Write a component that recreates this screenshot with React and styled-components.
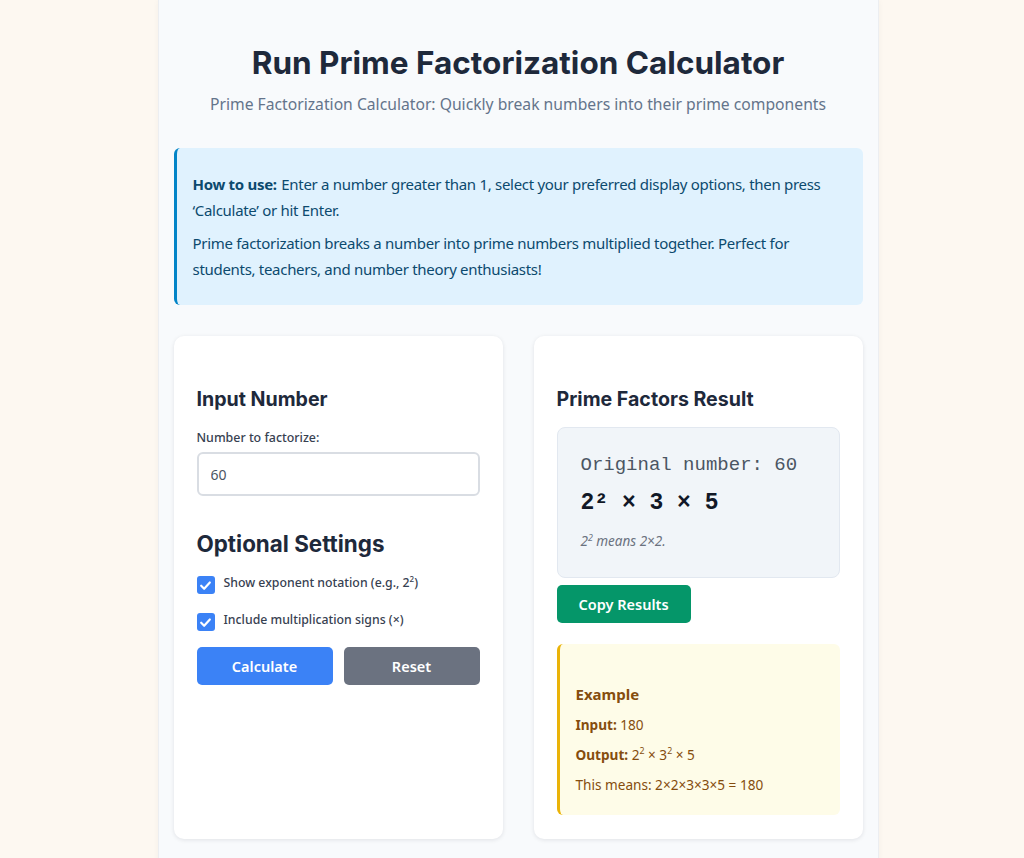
import React from "react";
import styled, { createGlobalStyle } from "styled-components";

const Global = createGlobalStyle`
  html, body { margin: 0; padding: 0; background: #fdf8f1; }
  body { font-family: "Noto Sans", "Liberation Sans", sans-serif; }
  * { box-sizing: border-box; }
`;

const Page = styled.div`
  display: flex;
  justify-content: center;
  padding-left: 12px;
  min-height: 858px;
`;

const Container = styled.div`
  width: 721px;
  background: #f8fafc;
  border-left: 1px solid #eceef1;
  border-right: 1px solid #eceef1;
  box-shadow: 0 0 6px rgba(0, 0, 0, 0.04);
  padding: 41px 15px 24px;
`;

const Title = styled.h1`
  margin: 0;
  text-align: center;
  font-family: "Inter", "Roboto", sans-serif;
  font-weight: 700;
  font-size: 31.5px;
  line-height: 44px;
  color: #1e293b;
`;

const Subtitle = styled.p`
  margin: 8px 0 0;
  text-align: center;
  font-size: 15.7px;
  line-height: 22px;
  color: #64748b;
`;

const InfoBox = styled.div`
  margin-top: 33px;
  background: #e0f2fe;
  border-left: 3px solid #0284c7;
  border-radius: 6px;
  padding: 23px 16px 23px;
  color: #0c4a6e;
  font-size: 15px;
  letter-spacing: -0.3px;
  line-height: 26px;
`;

const InfoPara = styled.p`
  margin: ${(p) => (p.$first ? "0" : "7px 0 0")};
`;

const Lead = styled.strong`
  font-weight: 700;
  margin-right: 1px;
`;

const Grid = styled.div`
  margin-top: 31px;
  display: grid;
  grid-template-columns: 1fr 1fr;
  gap: 31px;
`;

const Card = styled.section`
  background: #ffffff;
  border-radius: 10px;
  box-shadow: 0 1px 4px rgba(15, 23, 42, 0.1);
  padding: 50px 23px 24px;
  min-height: 503px;
`;

const CardTitle = styled.h2`
  margin: 0;
  font-family: "Inter", "Roboto", sans-serif;
  font-weight: 700;
  font-size: ${(p) => (p.$large ? "22.4px" : "19.6px")};
  line-height: 26px;
  color: #1e293b;
`;

const Label = styled.label`
  display: block;
  margin-top: 16px;
  font-size: 12.4px;
  font-weight: 500;
  line-height: 20px;
  color: #374151;
`;

const NumberInput = styled.input`
  display: block;
  margin-top: 4px;
  width: 100%;
  height: 44px;
  border: 2px solid #d9dde3;
  border-radius: 6px;
  padding: 0 12px;
  font-family: "Noto Sans", sans-serif;
  font-size: 14px;
  color: #4b5563;
  background: #fff;
  outline: none;
`;

const SettingsBlock = styled.div`
  margin-top: 35px;
`;

const CheckRow = styled.label`
  display: flex;
  align-items: center;
  gap: 9px;
  margin-top: 14px;
  font-size: 12.3px;
  font-weight: 500;
  line-height: 20px;
  color: #374151;
`;

const Box = styled.span`
  width: 18px;
  height: 18px;
  border-radius: 3px;
  background: #3b82f6;
  display: flex;
  align-items: center;
  justify-content: center;
  flex-shrink: 0;
  margin-top: 5px;
`;

const Sup = styled.sup`
  font-size: 0.65em;
  line-height: 0;
`;

const ButtonRow = styled.div`
  display: grid;
  grid-template-columns: 1fr 1fr;
  gap: 11px;
  margin-top: 16px;
`;

const Button = styled.button`
  height: 38px;
  border: none;
  border-radius: 5px;
  background: ${(p) => p.$bg};
  color: #fff;
  font-family: "Noto Sans", sans-serif;
  font-size: 14.5px;
  font-weight: 600;
  padding: 0 22px;
  cursor: pointer;
`;

const ResultBox = styled.div`
  margin-top: 15px;
  background: #f1f5f9;
  border: 1px solid #e2e8f0;
  border-radius: 8px;
  padding: 23px 23px 26px;
`;

const Original = styled.div`
  font-family: "Liberation Mono", "Courier New", monospace;
  font-size: 19px;
  line-height: 28px;
  color: #4b5563;
`;

const Factors = styled.div`
  margin-top: 9px;
  font-family: "Liberation Mono", "Courier New", monospace;
  font-weight: 700;
  font-size: 23px;
  line-height: 30px;
  color: #111827;
`;

const Note = styled.div`
  margin-top: 13px;
  font-style: italic;
  font-size: 13.5px;
  line-height: 20px;
  color: #6b7280;
`;

const CopyWrap = styled.div`
  display: flex;
  margin-top: 7px;
`;

const ExampleBox = styled.div`
  margin-top: 21px;
  background: #fefce8;
  border-left: 3px solid #eab308;
  border-radius: 6px;
  padding: 39px 16px 20px;
  color: #854d0e;
  font-size: 13.6px;
  line-height: 20px;
`;

const ExampleTitle = styled.div`
  font-weight: 700;
  font-size: 15px;
  line-height: 22px;
`;

const ExLine = styled.p`
  margin: 10px 0 0;
`;

const Check = () => (
  <svg width="13" height="13" viewBox="0 0 24 24" fill="none" stroke="#fff" strokeWidth="4" strokeLinecap="round" strokeLinejoin="round">
    <polyline points="4 12.5 9.5 18 20 6.5" />
  </svg>
);

export default function App() {
  return (
    <>
      <Global />
      <Page>
        <Container>
          <Title>Run Prime Factorization Calculator</Title>
          <Subtitle>Prime Factorization Calculator: Quickly break numbers into their prime components</Subtitle>
          <InfoBox>
            <InfoPara $first>
              <Lead>How to use:</Lead> Enter a number greater than 1, select your preferred display options, then press ‘Calculate’ or hit Enter.
            </InfoPara>
            <InfoPara>
              Prime factorization breaks a number into prime numbers multiplied together. Perfect for students, teachers, and number theory enthusiasts!
            </InfoPara>
          </InfoBox>
          <Grid>
            <Card>
              <CardTitle>Input Number</CardTitle>
              <Label htmlFor="num">Number to factorize:</Label>
              <NumberInput id="num" defaultValue="60" />
              <SettingsBlock>
                <CardTitle $large>Optional Settings</CardTitle>
                <CheckRow>
                  <Box><Check /></Box>
                  <span>Show exponent notation (e.g., 2<Sup>2</Sup>)</span>
                </CheckRow>
                <CheckRow>
                  <Box><Check /></Box>
                  <span>Include multiplication signs (×)</span>
                </CheckRow>
                <ButtonRow>
                  <Button $bg="#3b82f6">Calculate</Button>
                  <Button $bg="#6b7280">Reset</Button>
                </ButtonRow>
              </SettingsBlock>
            </Card>
            <Card>
              <CardTitle>Prime Factors Result</CardTitle>
              <ResultBox>
                <Original>Original number: 60</Original>
                <Factors>2² × 3 × 5</Factors>
                <Note>2<Sup>2</Sup> means 2×2.</Note>
              </ResultBox>
              <CopyWrap>
                <Button $bg="#059669">Copy Results</Button>
              </CopyWrap>
              <ExampleBox>
                <ExampleTitle>Example</ExampleTitle>
                <ExLine><strong>Input:</strong> 180</ExLine>
                <ExLine><strong>Output:</strong> 2<Sup>2</Sup> × 3<Sup>2</Sup> × 5</ExLine>
                <ExLine>This means: 2×2×3×3×5 = 180</ExLine>
              </ExampleBox>
            </Card>
          </Grid>
        </Container>
      </Page>
    </>
  );
}
